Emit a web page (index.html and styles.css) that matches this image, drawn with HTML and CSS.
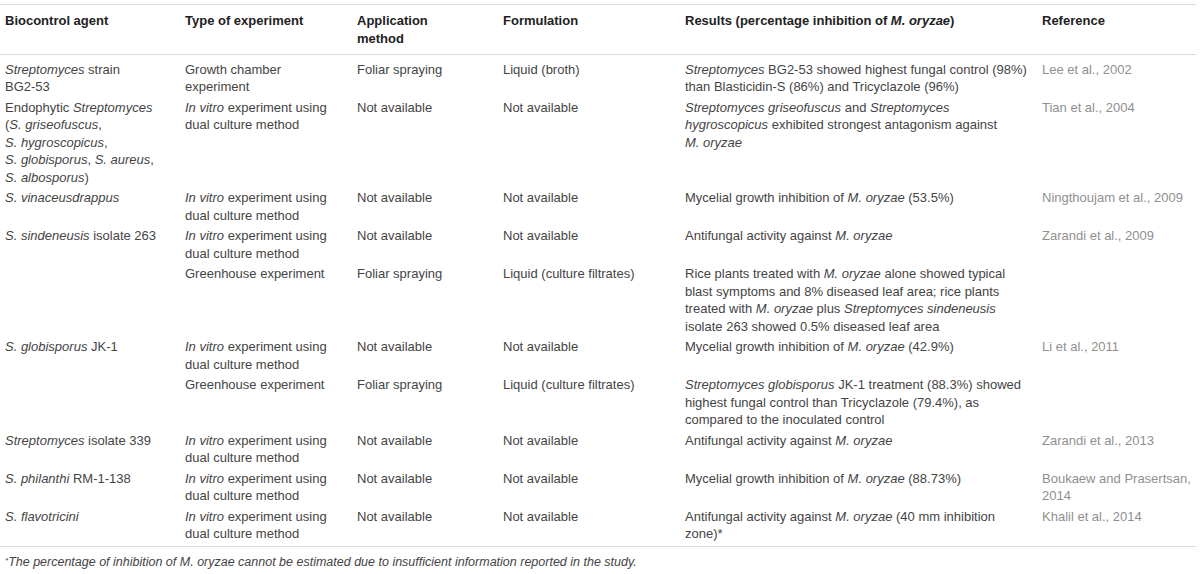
FILE: index.html
```html
<!DOCTYPE html>
<html>
<head>
<meta charset="utf-8">
<link rel="stylesheet" href="styles.css">
</head>
<body>
<div class="page">
<table class="data">
<colgroup>
<col class="c1"><col class="c2"><col class="c3"><col class="c4"><col class="c5"><col class="c6">
</colgroup>
<thead>
<tr>
<th>Biocontrol agent</th>
<th>Type of experiment</th>
<th>Application method</th>
<th>Formulation</th>
<th>Results (percentage inhibition of <i>M.&nbsp;oryzae</i>)</th>
<th>Reference</th>
</tr>
</thead>
<tbody>
<tr class="first">
<td><i>Streptomyces</i> strain <span class="nw">BG2-53</span></td>
<td>Growth chamber experiment</td>
<td>Foliar spraying</td>
<td>Liquid (broth)</td>
<td><i>Streptomyces</i> <span class="nw">BG2-53</span> showed highest fungal control (98%) than Blasticidin-S (86%) and Tricyclazole (96%)</td>
<td class="ref">Lee et al., 2002</td>
</tr>
<tr>
<td>Endophytic <i>Streptomyces</i> (<i>S.&nbsp;griseofuscus</i>, <i>S.&nbsp;hygroscopicus</i>, <i>S.&nbsp;globisporus</i>, <i>S.&nbsp;aureus</i>, <i>S.&nbsp;albosporus</i>)</td>
<td><i>In vitro</i> experiment using dual culture method</td>
<td>Not available</td>
<td>Not available</td>
<td><i>Streptomyces griseofuscus</i> and <i>Streptomyces hygroscopicus</i> exhibited strongest antagonism against <i>M.&nbsp;oryzae</i></td>
<td class="ref">Tian et al., 2004</td>
</tr>
<tr>
<td><i>S.&nbsp;vinaceusdrappus</i></td>
<td><i>In vitro</i> experiment using dual culture method</td>
<td>Not available</td>
<td>Not available</td>
<td>Mycelial growth inhibition of <i>M.&nbsp;oryzae</i> (53.5%)</td>
<td class="ref">Ningthoujam et al., 2009</td>
</tr>
<tr>
<td><i>S.&nbsp;sindeneusis</i> isolate 263</td>
<td><i>In vitro</i> experiment using dual culture method</td>
<td>Not available</td>
<td>Not available</td>
<td>Antifungal activity against <i>M.&nbsp;oryzae</i></td>
<td class="ref">Zarandi et al., 2009</td>
</tr>
<tr>
<td></td>
<td>Greenhouse experiment</td>
<td>Foliar spraying</td>
<td>Liquid (culture filtrates)</td>
<td>Rice plants treated with <i>M.&nbsp;oryzae</i> alone showed typical blast symptoms and 8% diseased leaf area; rice plants treated with <i>M.&nbsp;oryzae</i> plus <i>Streptomyces sindeneusis</i> isolate 263 showed 0.5% diseased leaf area</td>
<td class="ref"></td>
</tr>
<tr>
<td><i>S.&nbsp;globisporus</i> JK-1</td>
<td><i>In vitro</i> experiment using dual culture method</td>
<td>Not available</td>
<td>Not available</td>
<td>Mycelial growth inhibition of <i>M.&nbsp;oryzae</i> (42.9%)</td>
<td class="ref">Li et al., 2011</td>
</tr>
<tr>
<td></td>
<td>Greenhouse experiment</td>
<td>Foliar spraying</td>
<td>Liquid (culture filtrates)</td>
<td><i>Streptomyces globisporus</i> JK-1 treatment (88.3%) showed highest fungal control than Tricyclazole (79.4%), as compared to the inoculated control</td>
<td class="ref"></td>
</tr>
<tr>
<td><i>Streptomyces</i> isolate 339</td>
<td><i>In vitro</i> experiment using dual culture method</td>
<td>Not available</td>
<td>Not available</td>
<td>Antifungal activity against <i>M.&nbsp;oryzae</i></td>
<td class="ref">Zarandi et al., 2013</td>
</tr>
<tr>
<td><i>S.&nbsp;philanthi</i> RM-1-138</td>
<td><i>In vitro</i> experiment using dual culture method</td>
<td>Not available</td>
<td>Not available</td>
<td>Mycelial growth inhibition of <i>M.&nbsp;oryzae</i> (88.73%)</td>
<td class="ref">Boukaew and Prasertsan, 2014</td>
</tr>
<tr class="last">
<td><i>S.&nbsp;flavotricini</i></td>
<td><i>In vitro</i> experiment using dual culture method</td>
<td>Not available</td>
<td>Not available</td>
<td>Antifungal activity against <i>M.&nbsp;oryzae</i> (40 mm inhibition zone)*</td>
<td class="ref">Khalil et al., 2014</td>
</tr>
</tbody>
</table>
<p class="note"><sup>*</sup>The percentage of inhibition of M. oryzae cannot be estimated due to insufficient information reported in the study.</p>
</div>
</body>
</html>
```

FILE: styles.css
```css
html, body {
  margin: 0;
  padding: 0;
  background: #ffffff;
}
.page {
  width: 1196px;
  padding-top: 4px;
  font-family: "Liberation Sans", Arial, sans-serif;
  font-size: 13px;
  color: #444444;
}
.nw { white-space: nowrap; }
.data {
  width: 1196px;
  border-collapse: collapse;
  table-layout: fixed;
  border-top: 1px solid #dcdcdc;
  border-bottom: 1px solid #dcdcdc;
}
.c1 { width: 180px; }
.c2 { width: 172px; }
.c3 { width: 146px; }
.c4 { width: 182px; }
.c5 { width: 357px; }
.c6 { width: 159px; }
.data th {
  text-align: left;
  vertical-align: top;
  font-weight: bold;
  color: #222222;
  line-height: 18px;
  padding: 7px 10px 6px 5px;
  border-bottom: 1px solid #dcdcdc;
}
.data th:nth-child(3) { padding-right: 26px; }
.data td {
  vertical-align: top;
  line-height: 17.5px;
  padding: 1.5px 10px 1.5px 5px;
}
.data td:nth-child(1) { padding-right: 17px; }
.data td:nth-child(5),
.data th:nth-child(5) { padding-right: 2px; }
.data tr.first td { padding-top: 5.5px; }
.data tr.last td { padding-bottom: 3px; }
.data td.ref {
  color: #8f8f8f;
  padding-right: 4px;
}
.note {
  margin: 8px 0 0 5px;
  font-style: italic;
  font-size: 12.5px;
  color: #444444;
}
.note sup {
  font-size: 8px;
  vertical-align: 3px;
  line-height: 0;
}
```
